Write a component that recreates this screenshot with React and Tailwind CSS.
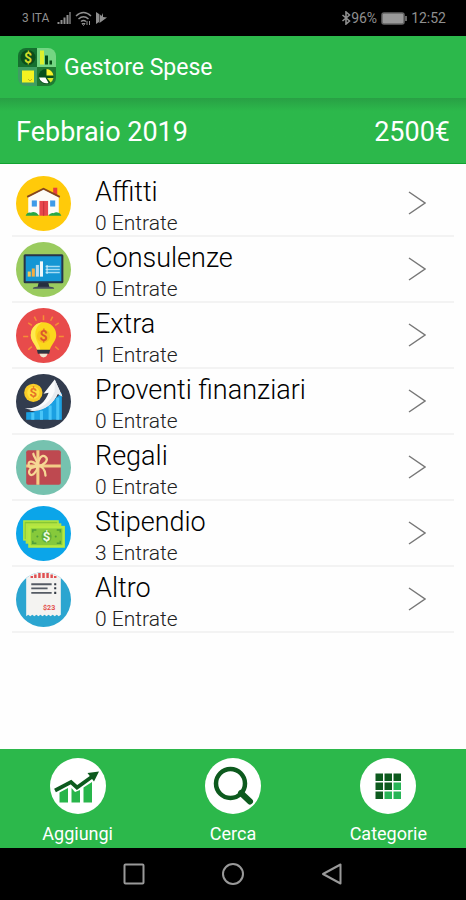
import React, { useState } from 'react';

const HouseIcon = () => (
    <svg viewBox="0 0 54 54" className="h-full w-full" aria-hidden="true">
        <circle cx="27" cy="27" r="27" fill="#ffca0a" />
        <rect x="36.5" y="11.5" width="4" height="8" fill="#e8403c" />
        <path d="M12 20.5 27 13l15 7.5V38H12z" fill="#fdfbf6" />
        <path d="M11 20.5 27 12.5l16 8" fill="none" stroke="#85451f" strokeWidth="1.8" />
        <rect x="23" y="24.5" width="8.5" height="14.5" fill="#e7474c" />
        <rect x="26.5" y="25" width="1.2" height="14" fill="#c9353d" />
        <rect x="15.5" y="24" width="5" height="6" fill="#3f9be8" />
        <rect x="33.5" y="24" width="5" height="6" fill="#3f9be8" />
        <path d="M9.5 39c1-3 3-3.5 5-3 2.5-1.5 5-.5 6.500 1L22.500 39zM32 39c1-2 3-3 5-2.500 2-1.500 6-1 7.500 2.500z" fill="#28a745" />
    </svg>
);

const MonitorIcon = () => (
    <svg viewBox="0 0 54 54" className="h-full w-full" aria-hidden="true">
        <circle cx="27" cy="27" r="27" fill="#9acb5f" />
        <path d="M22.5 39h9l1.500 6H21z" fill="#252e3f" />
        <path d="M16.5 46q0-2 4-2h13q4 0 4 2z" fill="#47515f" />
        <rect x="7.5" y="12" width="39" height="28.5" rx="1.5" fill="#273449" />
        <rect x="9.5" y="14" width="35" height="24.5" fill="#1496d4" />
        <rect x="11.5" y="29" width="3" height="5" fill="#efc65c" />
        <rect x="15.5" y="26" width="3" height="8" fill="#f5ad43" />
        <rect x="19.5" y="22.5" width="3" height="11.5" fill="#b9dcef" />
        <rect x="23.5" y="19" width="3" height="15" fill="#eef7fb" />
        <path d="M29 24h14M29 27h14M29 30h14" stroke="#a5dcf4" strokeWidth="1.6" />
        <path d="M30.5 22.5v9" stroke="#d5eef9" strokeWidth="1" />
    </svg>
);

const BulbIcon = () => (
    <svg viewBox="0 0 54 54" className="h-full w-full" aria-hidden="true">
        <circle cx="27" cy="27" r="27" fill="#e84b4b" />
        <path
            d="M27 7v5M18 8.5l2 4M36 8.500l-2 4M12 14.500l3.500 2.500M42 14.500 38.500 17M7 28h5M42 28h5M12 41l3.500-3M42 41l-3.500-3"
            stroke="#f58e35"
            strokeWidth="1.5"
        />
        <path d="M27 14a12.5 12.5 0 0 0-12.5 12.5c0 6 4.500 8.500 6.500 15h12c2-6.500 6.500-9 6.500-15A12.500 12.500 0 0 0 27 14z" fill="#fbd71c" />
        <path d="M27 14a12.5 12.5 0 0 0-12.5 12.5c0 6 4.500 8.500 6.500 15h3c-1-7-5-9-5-16C19 19 23 15 27 14z" fill="#ffe94f" />
        <circle cx="27" cy="27.5" r="6.5" fill="#f7bf1f" />
        <text x="27" y="32.5" textAnchor="middle" fontSize="14" fontWeight="700" fill="#db572b" fontFamily="Roboto, sans-serif">$</text>
        <path d="M20.5 41h13l-1 4h-11z" fill="#2f3440" />
        <path d="M23 45h8q-1 3.5-4 3.500T23 45z" fill="#f2e5cf" />
    </svg>
);

const GrowthIcon = () => (
    <svg viewBox="0 0 54 54" className="h-full w-full" aria-hidden="true">
        <circle cx="27" cy="27" r="27" fill="#323c4e" />
        <path d="M10 37.5q16 0 26-11l9-8V45H10z" fill="#1ba0e2" />
        <path d="M16.5 38v7M25 36v9M33.500 31v14M41 23v22" stroke="#49c5f7" strokeWidth="3" />
        <path d="M8.5 33.5c12 1.500 20-5 23.500-15l-5 1L38 5.500 45.500 22l-4.500-2.500C36 31 24 39.500 8.500 33.500z" fill="#fafbfd" />
        <path d="M38 5.5 45.5 22l-4.500-2.500C36 31 24 39 13 35.500 26 35 34 27 38 17z" fill="#e8ebf0" />
        <circle cx="17" cy="18.5" r="9" fill="#f8cb28" />
        <circle cx="17" cy="18.5" r="6" fill="#ffe03b" />
        <text x="17" y="23" textAnchor="middle" fontSize="13" fontWeight="700" fill="#e67326" fontFamily="Roboto, sans-serif">$</text>
    </svg>
);

const GiftIcon = () => (
    <svg viewBox="0 0 54 54" className="h-full w-full" aria-hidden="true">
        <circle cx="27" cy="27" r="27" fill="#76c2af" />
        <rect x="10" y="10" width="34" height="34" rx="2" fill="#be4950" />
        <path d="M21.5 10v34M10 25.5h34" stroke="#f3cd86" strokeWidth="3" />
        <path
            d="M21.5 25.500c-4-5-10-6-9-1s6 2 9 1zM21.500 25.500c0-7 4-12 7.500-9s-1 8-7.500 9zM21.500 25.500c-7 0-10 5-8 8s7-2 8-8zM21.500 25.500c0-6-4-8.500-4.500-12M21.500 25.500c5 0 7 4 7.500 9.500"
            fill="none"
            stroke="#f6d794"
            strokeWidth="2.2"
            strokeLinecap="round"
        />
    </svg>
);

const CashIcon = () => (
    <svg viewBox="0 0 54 54" className="h-full w-full" aria-hidden="true">
        <circle cx="27" cy="27" r="27" fill="#0ba5e9" />
        <rect x="7" y="14" width="35" height="20" fill="#b5e83f" />
        <rect x="8.5" y="15.5" width="32" height="17" fill="#86c834" />
        <rect x="9.5" y="17" width="35" height="20" fill="#b5e343" />
        <rect x="12" y="19.5" width="36" height="21.5" fill="#b6ea40" />
        <rect x="14.5" y="22" width="31" height="16.5" fill="#86c93b" />
        <path d="M16.5 26v-2.500H20M40 23.500h3.500V26M16.500 34v2.500H20M40 36.500h3.500V34" stroke="#4f9f38" strokeWidth="1.500" fill="none" />
        <ellipse cx="30" cy="30" rx="5" ry="6" fill="#5fae3b" />
        <text x="30" y="34.5" textAnchor="middle" fontSize="13" fontWeight="700" fill="#f2fbe3" fontFamily="Roboto, sans-serif">$</text>
        <circle cx="21" cy="30" r="1" fill="#4f9f38" />
        <circle cx="39" cy="30" r="1" fill="#4f9f38" />
    </svg>
);

const ReceiptIcon = () => (
    <svg viewBox="0 0 54 54" className="h-full w-full" aria-hidden="true">
        <circle cx="27" cy="27" r="27" fill="#2ba5d0" />
        <path
            d="M10 6A27 27 0 0 1 44 6v36l-2 1.500-2-1.500-2 1.500-2-1.500-2 1.500-2-1.500-2 1.500-2-1.500-2 1.500-2-1.500-2 1.500-2-1.500-2 1.500-2-1.500-2 1.500-2-1.500-2 1.500z"
            fill="#f4f3f1"
        />
        <path d="M15.500 4v2M19 2.500V6M23 1v5M27 1v5M31 1v5M35 2.500V6M38.500 4v2" stroke="#df5052" strokeWidth="2.400" />
        <path d="M15 12h20M15 16h16M15 20.500h20" stroke="#555b64" strokeWidth="1.800" />
        <path d="M37.500 12h2M37.500 16h2M37.500 20.500h2" stroke="#333943" strokeWidth="2" />
        <text x="32.5" y="37" textAnchor="middle" fontSize="7" fontWeight="700" fill="#e2504e" fontFamily="Roboto, sans-serif">$23</text>
    </svg>
);

const LogoIcon = () => (
    <svg viewBox="0 0 38 38" className="h-[38px] w-[38px]" aria-hidden="true">
        <path d="M8 0h11v19H0V8a8 8 0 0 1 8-8z" fill="#15702f" />
        <circle cx="10" cy="9.5" r="7.5" fill="#0b4d1b" />
        <path d="M19 0h11a8 8 0 0 1 8 8v11H19z" fill="#74d683" />
        <path d="M0 19h19v19H8a8 8 0 0 1-8-8z" fill="#3f9e63" />
        <path d="M19 19h19v11a8 8 0 0 1-8 8H19z" fill="#1f7a33" />
        <text x="10" y="14.5" textAnchor="middle" fontSize="14" fontWeight="700" fill="#d0dc2a" fontFamily="Roboto, sans-serif">$</text>
        <path d="M22 2.5h4v14h-4z" fill="#dcf02c" />
        <path d="M27 7.5h3v9h-3z" fill="#064d16" />
        <path d="M31.5 12.5H34v4h-2.500z" fill="#064d16" />
        <path d="M4 22.5h12v12H4z" fill="#f4f321" />
        <path d="M10 31l2 2 2-2" stroke="#c3b51a" fill="none" />
        <circle cx="28" cy="28.5" r="7.5" fill="#07501a" />
        <path d="M28.500 27.500V21a7.500 7.500 0 0 1 7 6.500z" fill="#f5f22a" />
        <path d="M29 30h6.500a7.500 7.500 0 0 1-3 4.500z" fill="#d5e92b" />
        <path d="M21 29.500h6.500l3 5.500a7.500 7.500 0 0 1-9.500-5.500z" fill="#fff" />
    </svg>
);

const AddIcon = () => (
    <svg viewBox="0 0 56 56" className="h-full w-full" aria-hidden="true">
        <path d="M9.500 34.500 18 30v14.500H9.500zM21.500 30l3.500 4 5-2v12.500h-8.500zM33.500 29.500l8.500-5.500v20.500h-8.500z" fill="#28b54b" />
        <path d="M5 32.500l16-8.500 6 5.500L43 18" fill="none" stroke="#0d5a1e" strokeWidth="3.800" />
        <path d="M37.500 15 49 13.500l-5 10z" fill="#0d5a1e" />
    </svg>
);

const SearchIcon = () => (
    <svg viewBox="0 0 56 56" className="h-full w-full" aria-hidden="true">
        <circle cx="25.5" cy="25.5" r="14.5" fill="none" stroke="#0d5a1e" strokeWidth="4.5" />
        <path d="M36 35l9 8.5" stroke="#0d5a1e" strokeWidth="6" strokeLinecap="round" />
    </svg>
);

const GridIcon = () => (
    <svg viewBox="0 0 56 56" className="h-full w-full" aria-hidden="true">
        <path d="M15.500 15.500h7.500v7.500h-7.500zM24.500 15.500h7.500v7.500h-7.500zM33.500 15.500h7.500v7.500h-7.500zM15.500 24.500h7.500v7.500h-7.500zM24.500 24.500h7.500v7.500h-7.500zM15.500 33.500h7.500v7.500h-7.500z" fill="#0d5a1e" />
        <path d="M33.500 24.500h7.500v7.500h-7.500zM24.500 33.500h7.500v7.500h-7.500zM33.500 33.500h7.500v7.500h-7.500z" fill="#28b557" />
    </svg>
);

const categories = [
    { name: 'Affitti', count: 0, icon: HouseIcon },
    { name: 'Consulenze', count: 0, icon: MonitorIcon },
    { name: 'Extra', count: 1, icon: BulbIcon },
    { name: 'Proventi finanziari', count: 0, icon: GrowthIcon },
    { name: 'Regali', count: 0, icon: GiftIcon },
    { name: 'Stipendio', count: 3, icon: CashIcon },
    { name: 'Altro', count: 0, icon: ReceiptIcon }
];

const actions = [
    { label: 'Aggiungi', icon: AddIcon },
    { label: 'Cerca', icon: SearchIcon },
    { label: 'Categorie', icon: GridIcon }
];

const StatusBar = () => (
    <div className="flex h-9 items-center justify-between bg-black pl-[22px] pr-5 text-[#8f8f8f]">
        <div className="flex items-center gap-2">
            <span className="text-xs">3 ITA</span>
            <svg viewBox="0 0 14 14" className="h-3.5 w-3.5" aria-hidden="true">
                <path d="M1.5 11v2M4.500 9v4M7.500 6.500V13M10.500 4v9" stroke="currentColor" strokeWidth="2" />
                <path d="M13 1v12" stroke="#666" strokeWidth="1.8" />
            </svg>
            <svg viewBox="0 0 17 15" className="-ml-1 h-[15px] w-[17px]" fill="none" stroke="currentColor" strokeWidth="1.5" aria-hidden="true">
                <path d="M1 5q7.500-7 15 0M3.500 8q5-4.500 10 0M6 10.500q2.500-2 5 0" />
                <path d="M7 12.500h3l-1.500 2zM12 10v4M14.500 10v4" strokeWidth="1" />
            </svg>
            <svg viewBox="0 0 11 12" className="-ml-1 h-3 w-[11px]" aria-hidden="true">
                <path d="M0 0l3 2v8l-3 2zM3.500 2l2 2L7 1v4l4 .5L3.500 11z" fill="currentColor" />
            </svg>
        </div>
        <div className="flex items-center">
            <svg viewBox="0 0 10 14" className="h-3.5 w-2.5" fill="none" stroke="currentColor" strokeWidth="1.6" aria-hidden="true">
                <path d="M1.5 4l7 6L5 13V1l3.500 3-7 6" />
            </svg>
            <span className="text-sm">96%</span>
            <svg viewBox="0 0 26 13" className="ml-1 h-[13px] w-[26px]" aria-hidden="true">
                <rect x="1" y="1" width="22" height="11" rx="2" fill="#999" stroke="#666" strokeWidth="1.5" />
                <path d="M25 4v5" stroke="#888" strokeWidth="1.5" />
            </svg>
            <span className="ml-1 text-sm">12:52</span>
        </div>
    </div>
);

const CategoryRow = ({ category, onSelect }) => {
    const Icon = category.icon;

    return (
        <li className="border-b-2 border-[#f3f3f3]">
            <button onClick={onSelect} className="flex h-16 w-full items-center pl-1 pr-7 text-left">
                <span className="h-[55px] w-[55px] shrink-0">
                    <Icon />
                </span>
                <span className="ml-6 flex flex-1 flex-col pt-0.5">
                    <span className="text-[27px] font-light leading-[38px] text-black">{category.name}</span>
                    <span className="text-[21px] font-light leading-6 text-[#222]">{category.count} Entrate</span>
                </span>
                <svg viewBox="0 0 18 24" className="h-6 w-[18px]" fill="none" stroke="#777" strokeWidth="1.5" aria-hidden="true">
                    <path d="M1 1l16 11L1 23" />
                </svg>
            </button>
        </li>
    );
};

const App = () => {
    const [, setSelected] = useState(null);

    return (
        <div className="flex min-h-screen flex-col bg-[#fefefe] font-[Roboto,sans-serif]">
            <StatusBar />

            {/* App bar */}
            <header className="flex h-[62px] items-center gap-2 bg-[#2cb84b] pl-[18px]">
                <LogoIcon />
                <h1 className="pt-0.5 text-[23px] leading-7 text-white">Gestore Spese</h1>
            </header>

            {/* Month total */}
            <div className="flex h-[66px] items-center justify-between border-b border-[#12a331] bg-linear-to-b from-[#28a044] to-[#2cb84b] to-20% px-4 pt-1 text-[27px] text-white">
                <span>Febbraio 2019</span>
                <span>2500€</span>
            </div>

            <main className="flex-1 px-3 pt-[7px]">
                <ul>
                    {categories.map((category) => (
                        <CategoryRow
                            key={category.name}
                            category={category}
                            onSelect={() => setSelected(category.name)}
                        />
                    ))}
                </ul>
            </main>

            {/* Bottom actions */}
            <nav className="grid h-[99px] grid-cols-3 bg-[#2cb84b]">
                {actions.map(({ label, icon: Icon }) => (
                    <button key={label} className="flex flex-col items-center gap-2 pt-[9px] text-lg leading-6 text-white">
                        <span className="h-14 w-14 rounded-full bg-white">
                            <Icon />
                        </span>
                        {label}
                    </button>
                ))}
            </nav>

            {/* System keys */}
            <div className="flex h-[52px] items-center justify-center gap-[77px] bg-black text-[#999]">
                <button aria-label="Recenti">
                    <svg viewBox="0 0 22 22" className="h-[22px] w-[22px]" fill="none" stroke="currentColor" strokeWidth="2">
                        <rect x="1.5" y="1.5" width="19" height="19" rx="1" />
                    </svg>
                </button>
                <button aria-label="Home">
                    <svg viewBox="0 0 22 22" className="h-[22px] w-[22px]" fill="none" stroke="currentColor" strokeWidth="2">
                        <circle cx="11" cy="11" r="10" />
                    </svg>
                </button>
                <button aria-label="Indietro">
                    <svg viewBox="0 0 22 22" className="h-[22px] w-[22px]" fill="none" stroke="currentColor" strokeWidth="2" strokeLinejoin="round">
                        <path d="M19.5 1.5v19L2 11z" />
                    </svg>
                </button>
            </div>
        </div>
    );
};

export default App;
